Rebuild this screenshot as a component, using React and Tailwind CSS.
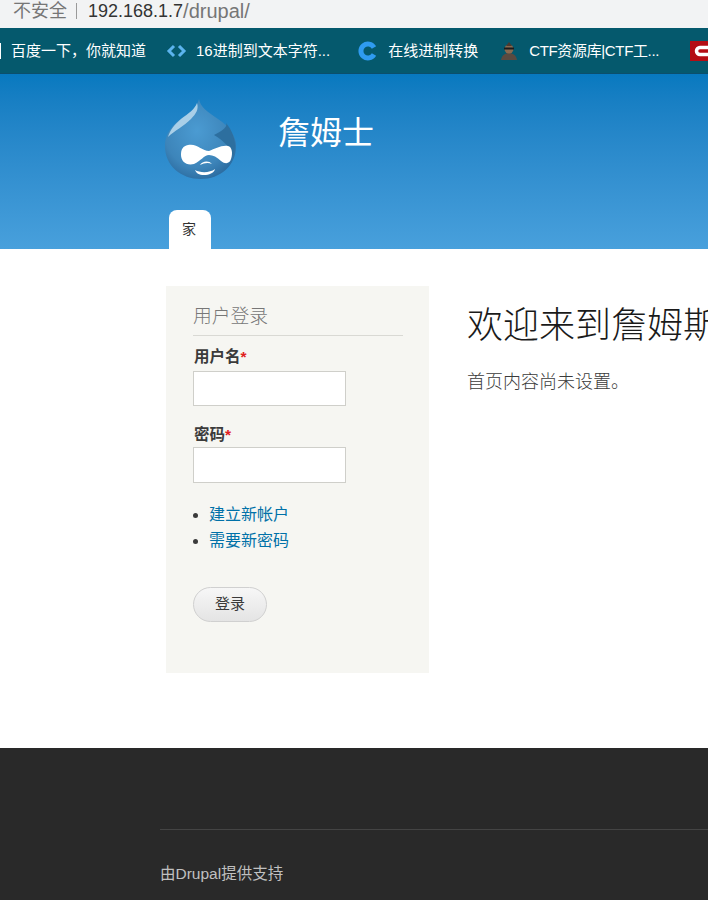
import React from "react";

const font = { fontFamily: '"Liberation Sans","Noto Sans CJK SC",sans-serif' };

function Drop() {
  return (
    <svg width="74" height="82" viewBox="0 0 74 82">
      <defs>
        <radialGradient id="d" cx="45%" cy="40%" r="65%">
          <stop offset="0" stopColor="#4b9bd2" />
          <stop offset="0.7" stopColor="#3d85ba" />
          <stop offset="1" stopColor="#2a6a9e" />
        </radialGradient>
      </defs>
      <path d="M35 0C36 8 44 13 54 20C66 28 72 38 72 47C72 67 56 80 37 80C17 80 1 67 1 47C1 32 12 23 21 17C28 12 33 8 35 0Z" fill="url(#d)" />
      <path d="M33 4C31 10 24 15 17 20C11 25 6 31 4 38C10 32 20 27 27 20C32 15 35 10 33 4Z" fill="#a9cfe8" />
      <path d="M50 36C58 32 64 28 62 24C68 31 71 40 71 47C71 51 70 55 69 58C68 50 60 42 50 36Z" fill="#2d6f9f" />
      <path d="M24 46C33 44 38 52 45 52C51 50 57 46 64 47C68 48 69 54 67 60C66 64 62 66 57 62C53 58 49 56 45 56C40 56 37 62 30 65C22 67 17 62 17 56C17 50 19 47 24 46Z" fill="#ffffff" />
      <path d="M31 71C36 74 46 74 51 70C50 74 45 76 40 76C35 76 32 74 31 71Z" fill="#ffffff" />
      <path d="M36 66C38 62 45 61 48 65C44 63 40 64 36 66Z" fill="#ffffff" />
    </svg>
  );
}

function Bookmark({ icon, label, className, textClass }) {
  return (
    <div className={`flex items-center shrink-0 ${className}`}>
      {icon}
      <span className={`text-[15px] leading-[20px] text-white whitespace-nowrap ${textClass}`}>{label}</span>
    </div>
  );
}

function Field({ label, className, inputClass }) {
  return (
    <div className={className}>
      <div className="text-[15.5px] leading-[18px] font-bold text-[#3b3b3b]">
        {label}
        <span className="text-[#e02020]">*</span>
      </div>
      <div className={`ml-[-1px] w-[153px] bg-white border border-[#cfcfca] ${inputClass}`} />
    </div>
  );
}

export default function App() {
  return (
    <div style={font} className="w-[708px] h-[900px] overflow-hidden bg-white flex flex-col">
      <div className="h-[28px] shrink-0 bg-[#f2f3f4] flex items-center text-[18px] leading-[20px] pb-[7px] whitespace-nowrap">
        <span className="ml-[13px] text-[#767676]">不安全</span>
        <span className="ml-[9px] w-px h-[16px] bg-[#9a9a9a]" />
        <span className="ml-[11px] text-[#333333]">192.168.1.7</span>
        <span className="text-[#767676] text-[20px]">/drupal/</span>
      </div>

      <div className="h-[46px] shrink-0 bg-[#05596d] border-b border-[#0b4f6c] flex items-center overflow-hidden">
        <div className="w-[1px] h-[16px] bg-white mr-[10px] shrink-0" />
        <Bookmark label="百度一下，你就知道" />
        <Bookmark
          className="ml-[20px]"
          label="16进制到文本字符..."
          icon={
            <svg className="mr-[9px]" width="21" height="14" viewBox="0 0 21 14" fill="none" stroke="#5cb4ee" strokeWidth="3">
              <path d="M8 2L3 7L8 12" />
              <path d="M13 2L18 7L13 12" />
            </svg>
          }
        />
        <Bookmark
          className="ml-[28px]"
          label="在线进制转换"
          icon={
            <svg className="mr-[10px]" width="20" height="20" viewBox="0 0 20 20" fill="none">
              <path d="M16 6.5A7 7 0 1 0 16 13.5" stroke="#2f9bf0" strokeWidth="5" />
            </svg>
          }
        />
        <Bookmark
          className="ml-[21px]"
          textClass="tracking-[-0.35px]"
          label="CTF资源库|CTF工..."
          icon={
            <svg className="mr-[10px]" width="20" height="20" viewBox="0 0 20 20">
              <path d="M2 19C3 14 6 12 10 12C14 12 17 14 18 19Z" fill="#5a4a40" />
              <circle cx="10" cy="8" r="4.5" fill="#8a6a50" />
              <rect x="5" y="6.5" width="10" height="2" fill="#1c1c1c" />
              <path d="M7 5L10 1L13 5Z" fill="#4a3a30" />
            </svg>
          }
        />
        <div className="ml-[31px] shrink-0 w-[20px] h-[20px] bg-[#b40d14] flex items-center justify-start pl-[3px]">
          <svg width="17" height="14" viewBox="0 0 17 14" fill="none">
            <path d="M17 3.5H7A3.5 3.5 0 0 0 7 10.5H17" stroke="#ffffff" strokeWidth="3.5" />
          </svg>
        </div>
      </div>

      <header className="h-[175px] shrink-0 bg-gradient-to-b from-[#0779bf] to-[#48a0dc] flex flex-col pl-[160px]">
        <div className="flex items-start h-[136px]">
          <div className="mt-[25px] ml-[4px] w-[74px]">
            <Drop />
          </div>
          <h1 className="mt-[37px] ml-[40px] text-[32px] leading-[44px] font-normal text-white">詹姆士</h1>
        </div>
        <div className="ml-[9px] w-[42px] h-[39px] bg-white rounded-t-[8px] flex items-center justify-center pr-[2px] text-[14px] text-[#333333]">
          家
        </div>
      </header>

      <main className="h-[499px] shrink-0 bg-white flex items-start pl-[166px] pt-[37px]">
        <aside className="w-[263px] h-[387px] shrink-0 bg-[#f6f6f2] pl-[27px] pr-[26px] pt-[19px]">
          <h2 className="text-[18.75px] leading-[24px] font-light text-[#777777] pb-[6px] border-b border-[#d9d9d4]">用户登录</h2>
          <Field label="用户名" className="mt-[12px] ml-[1px]" inputClass="mt-[5px] h-[35px]" />
          <Field label="密码" className="mt-[20px] ml-[1px]" inputClass="mt-[3px] h-[36px]" />
          <ul className="mt-[19px] ml-[16px] list-disc text-[16px] leading-[26px] text-[#0071a8] marker:text-[#3b3b3b]">
            <li>建立新帐户</li>
            <li>需要新密码</li>
          </ul>
          <div className="mt-[33px] w-[74px] h-[35px] rounded-full bg-gradient-to-b from-[#f7f7f7] to-[#e4e4e4] border border-[#d0d0d0] flex items-center justify-center text-[15px] text-[#3a3a3a]">
            登录
          </div>
        </aside>
        <section className="ml-[38px] shrink-0 whitespace-nowrap">
          <h1 className="mt-[19px] text-[36px] leading-[42px] font-light text-[#1a1a1a]">欢迎来到詹姆斯</h1>
          <p className="mt-[23px] text-[18px] leading-[24px] font-light text-[#3b3b3b]">首页内容尚未设置。</p>
        </section>
      </main>

      <footer className="flex-1 bg-[#292929] pl-[160px] pt-[81px]">
        <div className="border-t border-[#444444] pt-[34px] text-[15.5px] leading-[20px] text-[#c0c0c0]">由Drupal提供支持</div>
      </footer>
    </div>
  );
}
